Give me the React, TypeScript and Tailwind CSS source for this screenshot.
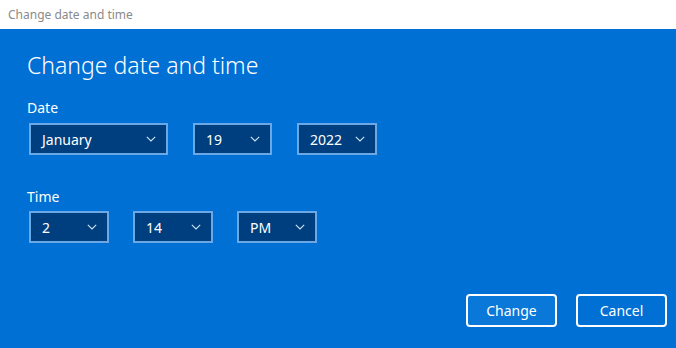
import React from 'react';

const font = { fontFamily: '"Segoe UI", "Noto Sans", "Open Sans", sans-serif' };

function Chevron() {
  return (
    <svg width="10" height="6" viewBox="0 0 10 6" fill="none" className="shrink-0">
      <path d="M0.8 0.8 L5 5 L9.2 0.8" stroke="#cfe3f7" strokeWidth="1.1" />
    </svg>
  );
}

function Select({ value, width }: { value: string; width: string }) {
  return (
    <div
      className={`${width} h-[32px] flex items-center justify-between pl-[11px] pr-[10px] bg-[#003f7f] border-2 border-[#6aa9e6] text-white text-[14px]`}
    >
      <span>{value}</span>
      <Chevron />
    </div>
  );
}

export default function App() {
  return (
    <div className="w-[676px] h-[348px] flex flex-col overflow-hidden" style={font}>
      <div className="h-[29px] shrink-0 bg-white flex items-center pl-[8px] text-[12px] text-[#8a8a8a]">
        Change date and time
      </div>
      <div className="flex-1 bg-[#0170d4] flex flex-col pl-[27px] pr-[9px] text-white">
        <h1 className="mt-[21px] text-[23px] font-light leading-[30px]">Change date and time</h1>
        <div className="mt-[18px] text-[14px] leading-[20px]">Date</div>
        <div className="mt-[5px] ml-[2px] flex gap-[25px]">
          <Select value="January" width="w-[139px]" />
          <Select value="19" width="w-[79px]" />
          <Select value="2022" width="w-[80px]" />
        </div>
        <div className="mt-[32px] text-[14px] leading-[20px]">Time</div>
        <div className="mt-[4px] ml-[2px] flex gap-[24px]">
          <Select value="2" width="w-[80px]" />
          <Select value="14" width="w-[80px]" />
          <Select value="PM" width="w-[80px]" />
        </div>
        <div className="mt-[51px] flex justify-end gap-[19px]">
          <button className="w-[91px] h-[33px] rounded-[4px] border-2 border-white bg-[#0978d8] text-[14px] text-white">
            Change
          </button>
          <button className="w-[91px] h-[33px] rounded-[4px] border-2 border-white bg-[#0170d4] text-[14px] text-white">
            Cancel
          </button>
        </div>
      </div>
    </div>
  );
}
